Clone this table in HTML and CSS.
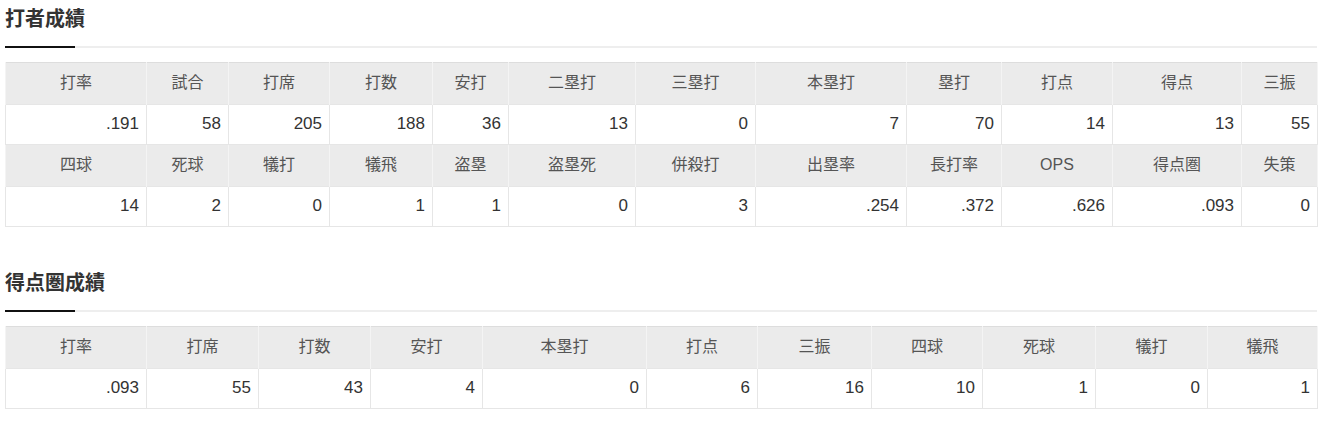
FILE: index.html
```html
<!DOCTYPE html>
<html lang="ja">
<head>
<meta charset="utf-8">
<title>成績</title>
<link rel="stylesheet" href="styles.css">
</head>
<body>
<div class="page">
  <section class="block">
    <h2 class="title">打者成績</h2>
    <table class="stats t1">
      <colgroup><col><col><col><col><col><col><col><col><col><col><col><col></colgroup>
      <tr class="head"><th>打率</th><th>試合</th><th>打席</th><th>打数</th><th>安打</th><th>二塁打</th><th>三塁打</th><th>本塁打</th><th>塁打</th><th>打点</th><th>得点</th><th>三振</th></tr>
      <tr><td>.191</td><td>58</td><td>205</td><td>188</td><td>36</td><td>13</td><td>0</td><td>7</td><td>70</td><td>14</td><td>13</td><td>55</td></tr>
      <tr class="head"><th>四球</th><th>死球</th><th>犠打</th><th>犠飛</th><th>盗塁</th><th>盗塁死</th><th>併殺打</th><th>出塁率</th><th>長打率</th><th>OPS</th><th>得点圏</th><th>失策</th></tr>
      <tr><td>14</td><td>2</td><td>0</td><td>1</td><td>1</td><td>0</td><td>3</td><td>.254</td><td>.372</td><td>.626</td><td>.093</td><td>0</td></tr>
    </table>
  </section>
  <section class="block second">
    <h2 class="title">得点圏成績</h2>
    <table class="stats t2">
      <colgroup><col><col><col><col><col><col><col><col><col><col><col></colgroup>
      <tr class="head"><th>打率</th><th>打席</th><th>打数</th><th>安打</th><th>本塁打</th><th>打点</th><th>三振</th><th>四球</th><th>死球</th><th>犠打</th><th>犠飛</th></tr>
      <tr><td>.093</td><td>55</td><td>43</td><td>4</td><td>0</td><td>6</td><td>16</td><td>10</td><td>1</td><td>0</td><td>1</td></tr>
    </table>
  </section>
</div>
</body>
</html>
```
FILE: styles.css
```css
html, body {
  margin: 0;
  padding: 0;
  background: #fff;
}
body {
  font-family: "Liberation Sans", "Noto Sans CJK JP", sans-serif;
  color: #333;
}
.page {
  width: 1312px;
  margin-left: 5px;
}
.block.second {
  margin-top: 37px;
}
.title {
  position: relative;
  margin: 0;
  padding: 4px 0 14px;
  font-family: "Noto Sans CJK JP", sans-serif;
  font-size: 20px;
  line-height: 28px;
  font-weight: 700;
  color: #333;
  border-bottom: 2px solid #eeeeee;
}
.title::after {
  content: "";
  position: absolute;
  left: 0;
  bottom: -2px;
  width: 70px;
  height: 2px;
  background: #111;
}
.stats {
  margin-top: 14px;
  width: 1312px;
  table-layout: fixed;
  border-collapse: collapse;
  border: 1px solid #dddddd;
}
.stats th {
  background: #ebebeb;
  font-family: "Liberation Sans", "Noto Sans CJK JP", sans-serif;
  font-weight: 400;
  font-size: 16px;
  line-height: 24px;
  color: #555;
  text-align: center;
  padding: 8px 6px 9px;
  border-left: 1px solid #f4f4f4;
  border-right: 1px solid #f4f4f4;
}
.stats td {
  font-size: 17px;
  line-height: 24px;
  color: #333;
  text-align: right;
  padding: 7px 7px 8px;
  border: 1px solid #e6e6e6;
}
.t1 col:nth-child(1) { width: 141px; }
.t1 col:nth-child(2) { width: 82px; }
.t1 col:nth-child(3) { width: 101px; }
.t1 col:nth-child(4) { width: 103px; }
.t1 col:nth-child(5) { width: 76px; }
.t1 col:nth-child(6) { width: 127px; }
.t1 col:nth-child(7) { width: 120px; }
.t1 col:nth-child(8) { width: 151px; }
.t1 col:nth-child(9) { width: 95px; }
.t1 col:nth-child(10) { width: 111px; }
.t1 col:nth-child(11) { width: 129px; }
.t1 col:nth-child(12) { width: 76px; }

.t2 col:nth-child(1) { width: 141px; }
.t2 col:nth-child(2) { width: 112px; }
.t2 col:nth-child(3) { width: 112px; }
.t2 col:nth-child(4) { width: 112px; }
.t2 col:nth-child(5) { width: 164px; }
.t2 col:nth-child(6) { width: 111px; }
.t2 col:nth-child(7) { width: 114px; }
.t2 col:nth-child(8) { width: 111px; }
.t2 col:nth-child(9) { width: 113px; }
.t2 col:nth-child(10) { width: 112px; }
.t2 col:nth-child(11) { width: 110px; }
```
